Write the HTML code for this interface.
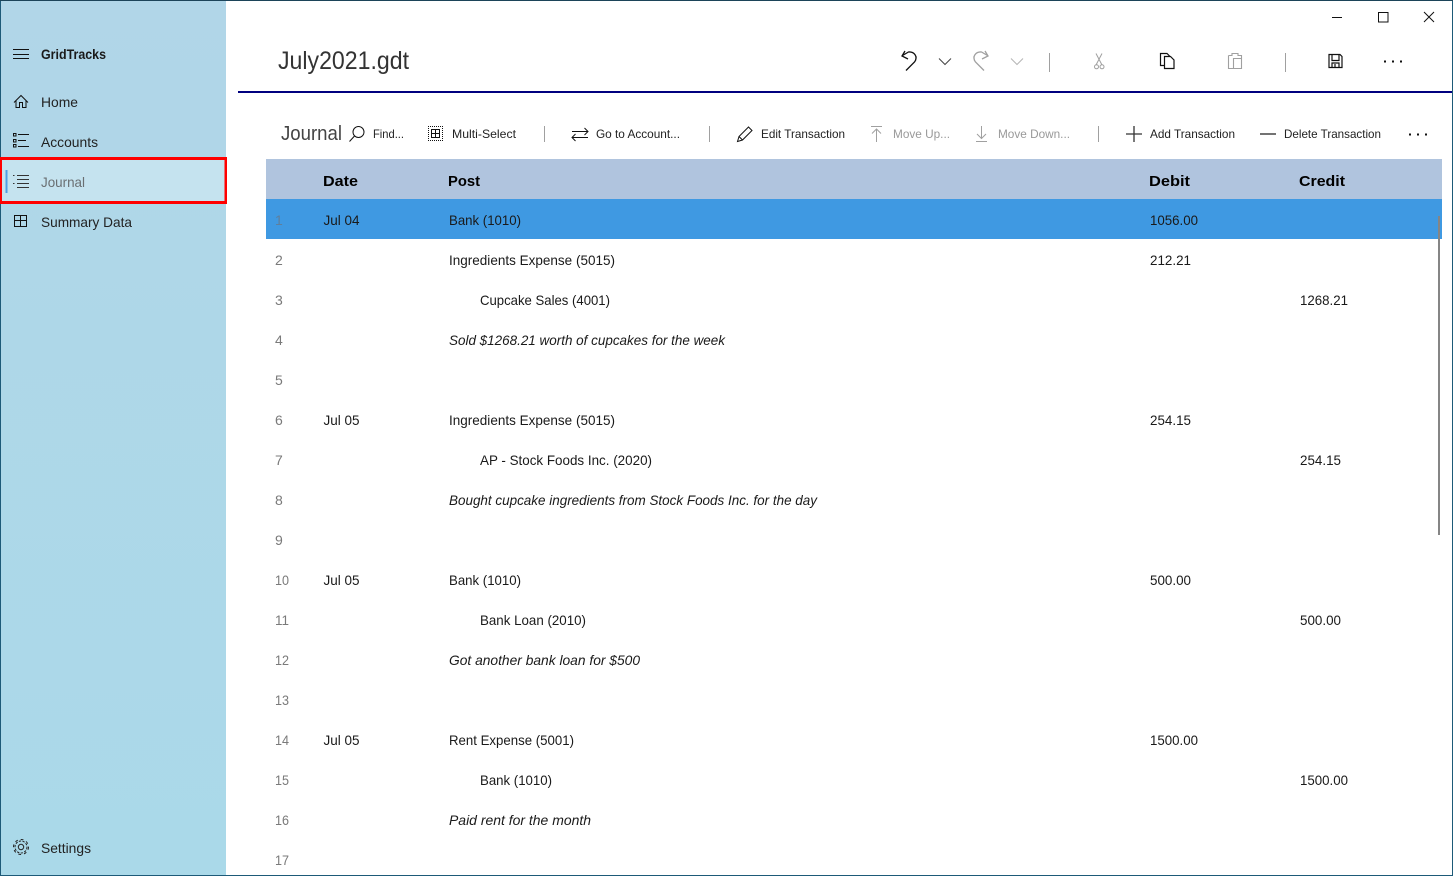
<!DOCTYPE html>
<html lang="en">
<head>
<meta charset="utf-8">
<title>GridTracks - July2021.gdt</title>
<style>
html,body{margin:0;padding:0;width:1453px;height:876px;overflow:hidden;background:#fff}
svg{display:block}
text{font-family:"Liberation Sans",Arial,sans-serif;font-size:14px;fill:#1a1a1a}
.nav{font-size:14px;fill:#222}
.tb{font-size:12px;fill:#222}
.dis{font-size:12px;fill:#999}
.h{font-size:15px;font-weight:bold;fill:#000}
.n{fill:#7a7a7a}
.i{font-style:italic}
.ic{fill:none;stroke:#111;stroke-width:1}
.g{fill:none;stroke:#a0a0a0;stroke-width:1}
</style>
</head>
<body>
<svg width="1453" height="876" viewBox="0 0 1453 876" xmlns="http://www.w3.org/2000/svg">
<defs>
<linearGradient id="sb" x1="0" y1="0" x2="0" y2="1"><stop offset="0" stop-color="#b1d6e8"/><stop offset="1" stop-color="#aad9e9"/></linearGradient>
</defs>
<rect width="1453" height="876" fill="#fff"/>
<rect x="0" y="0" width="226" height="876" fill="url(#sb)"/>

<!-- window border -->
<rect x="0.5" y="0.5" width="1452" height="875" fill="none" stroke="#1d5a78"/>
<rect x="0" y="0" width="1453" height="1" fill="#1c4459"/>

<!-- selected nav item -->
<rect x="1" y="159" width="224" height="43" fill="#c5e3ef"/>
<rect x="5.5" y="170" width="2" height="23" fill="#4f9fe3"/>
<rect x="0" y="157" width="227" height="3" fill="#f00"/>
<rect x="0" y="201" width="227" height="3" fill="#f00"/>
<rect x="0" y="157" width="2" height="47" fill="#f00"/>
<rect x="224.500" y="157" width="2.500" height="47" fill="#f00"/>

<!-- hamburger -->
<path class="ic" d="M13 49.5H29M13 54.5H29M13 58.5H29"/>
<text x="41" y="59" textLength="65" lengthAdjust="spacingAndGlyphs" style="font-weight:bold;font-size:13.5px;fill:#1a1a1a">GridTracks</text>

<!-- home -->
<path class="ic" d="M14 102.5L21 95.5L28 102.5M16 100.5V107.5H19.5V102.5H22.5V107.5H26V100.5"/>
<text class="nav" x="41" y="107" textLength="37" lengthAdjust="spacingAndGlyphs">Home</text>

<!-- accounts -->
<path class="ic" d="M13.5 133.5h2.500v2.500h-2.500zM13.5 139.5h2.500v2.500h-2.500zM13.5 144.5h2.500v2.500h-2.500zM18 134.5H29M18 140.5H26M18 146.5H29"/>
<text class="nav" x="41" y="147" textLength="57" lengthAdjust="spacingAndGlyphs">Accounts</text>

<!-- journal -->
<path class="ic" style="stroke:#333" d="M17 175.5H29M17 179.5H29M17 183.5H29M17 187.5H29"/>
<path class="ic" style="stroke:#333" d="M13 175.5h1.500M13 183.5h1.500"/>
<text class="nav" x="41" y="187" textLength="44" lengthAdjust="spacingAndGlyphs" style="fill:#6a6f72">Journal</text>

<!-- summary -->
<path class="ic" d="M14.5 215.5H26.5V226.5H14.5ZM20.5 215.5V226.5M14.5 220.5H26.5"/>
<text class="nav" x="41" y="227" textLength="91" lengthAdjust="spacingAndGlyphs">Summary Data</text>

<!-- settings -->
<g class="ic" style="stroke:#222;stroke-width:1">
<circle cx="21" cy="847" r="2.700"/>
<circle cx="21" cy="847" r="6" stroke-dasharray="2.300 1.400"/>
<circle cx="21" cy="847" r="7.500" stroke-dasharray="2.800 3"/>
</g>
<text class="nav" x="41" y="853" textLength="50" lengthAdjust="spacingAndGlyphs">Settings</text>

<!-- title -->
<text x="278" y="69" textLength="131" lengthAdjust="spacingAndGlyphs" style="font-size:25px;fill:#333">July2021.gdt</text>
<rect x="238" y="91" width="1214" height="2" fill="#00007f"/>

<!-- window controls -->
<path class="ic" d="M1332 17.5H1342"/>
<rect x="1378.5" y="12.5" width="9.5" height="9.5" class="ic"/>
<path class="ic" d="M1424 12L1434 22M1434 12L1424 22"/>

<!-- top commands -->
<path class="ic" style="stroke-width:1.300" d="M906 70.5L914.5 62C918.5 56.5 914 51.5 908.5 52L902.5 55.5M905 51L902 56L908 59"/>
<path class="ic" style="stroke:#444" d="M939 58.5L945 64.5L951 58.5"/>
<path class="g" style="stroke-width:1.300" d="M984 70.5L975.5 62C971.5 56.5 976 51.5 981.5 52L987.5 55.5M985 51L988 56L982 59"/>
<path class="g" style="stroke:#b5b5b5" d="M1011 58.5L1017 64.5L1023 58.5"/>
<path class="g" d="M1049.5 53V72"/>
<path class="g" d="M1096 53.5L1102 65M1102 53.5L1096 65"/>
<circle class="g" cx="1096.5" cy="66.8" r="2"/>
<circle class="g" cx="1102" cy="66.8" r="2"/>
<path class="ic" style="stroke-width:1.200" d="M1164 65.5H1160.5V53.5H1167L1170 56.5M1164.5 56.5H1170.5L1174 60V68.5H1164.5Z"/>
<path class="g" style="stroke-width:1.100" d="M1228.5 55.5H1232V53.5H1238V55.5H1241.5V58M1228.5 55.5V68.5H1233M1233.5 58.5H1241.5V68.5H1233.5Z"/>
<path class="g" d="M1285.5 53V72"/>
<path class="ic" style="stroke-width:1.200" d="M1329 54.5H1340L1342 56.5V67.5H1329ZM1332 54.5V60.5H1339V54.5M1332 67.5V63H1339V67.5M1335 64V67"/>
<path class="ic" style="stroke-width:2;stroke-dasharray:2 6" d="M1384 61.5H1404"/>

<!-- journal toolbar -->
<text x="281" y="140" textLength="61" lengthAdjust="spacingAndGlyphs" style="font-size:20px;fill:#444">Journal</text>
<circle class="ic" cx="358.5" cy="132" r="5.500"/>
<path class="ic" d="M354.500 136L349.500 141.500"/>
<text class="tb" x="373" y="138" textLength="31" lengthAdjust="spacingAndGlyphs">Find...</text>
<path d="M428 126.500H443M428 140.500H443M428.500 126V141M442.500 126V141" fill="none" stroke="#111" stroke-dasharray="1 1"/>
<path class="ic" d="M431.500 129.500H439.500V137.500H431.500ZM435.500 129.500V137.500M431.500 133.500H439.500"/>
<text class="tb" x="452" y="138" textLength="64" lengthAdjust="spacingAndGlyphs">Multi-Select</text>
<path class="g" d="M544.500 126V142"/>
<path class="ic" d="M572 131.500H588M584.500 128L588 131.500L584.500 135M588 137.500H572M575.500 134L572 137.500L575.500 141"/>
<text class="tb" x="596" y="138" textLength="84" lengthAdjust="spacingAndGlyphs">Go to Account...</text>
<path class="g" d="M709.500 126V142"/>
<path class="ic" d="M737.500 141.500L739 136.500L748.500 127L752 130.500L742.500 140ZM739 136.500L742.500 140"/>
<text class="tb" x="761" y="138" textLength="84" lengthAdjust="spacingAndGlyphs">Edit Transaction</text>
<path class="g" d="M871 126.500H882M876.500 142V129M872 133.500L876.500 129L881 133.500"/>
<text class="dis" x="893" y="138" textLength="57" lengthAdjust="spacingAndGlyphs">Move Up...</text>
<path class="g" d="M976 141.500H987M981.500 126V138.500M977 134L981.500 138.500L986 134"/>
<text class="dis" x="998" y="138" textLength="72" lengthAdjust="spacingAndGlyphs">Move Down...</text>
<path class="g" d="M1098.500 126V142"/>
<path d="M1126 134H1142M1134 126V142" fill="none" stroke="#333" stroke-width="1.300"/>
<text class="tb" x="1150" y="138" textLength="85" lengthAdjust="spacingAndGlyphs">Add Transaction</text>
<path d="M1260 134H1276" fill="none" stroke="#444" stroke-width="1.500"/>
<text class="tb" x="1284" y="138" textLength="97" lengthAdjust="spacingAndGlyphs">Delete Transaction</text>
<path class="ic" style="stroke-width:2;stroke-dasharray:2 6" d="M1409 134.500H1429"/>

<!-- grid header -->
<rect x="266" y="159" width="1176" height="40" fill="#b0c4de"/>
<text class="h" x="323" y="186" textLength="35" lengthAdjust="spacingAndGlyphs">Date</text>
<text class="h" x="448" y="186" textLength="32" lengthAdjust="spacingAndGlyphs">Post</text>
<text class="h" x="1149" y="186" textLength="41" lengthAdjust="spacingAndGlyphs">Debit</text>
<text class="h" x="1299" y="186" textLength="46" lengthAdjust="spacingAndGlyphs">Credit</text>

<rect x="266" y="199" width="1176" height="40" fill="#3f99e2"/>

<!-- row numbers -->
<text class="n" x="275" y="225" style="fill:#5f7f9c">1</text>
<text class="n" x="275" y="265">2</text>
<text class="n" x="275" y="305">3</text>
<text class="n" x="275" y="345">4</text>
<text class="n" x="275" y="385">5</text>
<text class="n" x="275" y="425">6</text>
<text class="n" x="275" y="465">7</text>
<text class="n" x="275" y="505">8</text>
<text class="n" x="275" y="545">9</text>
<text class="n" x="275" y="585" textLength="14" lengthAdjust="spacingAndGlyphs">10</text>
<text class="n" x="275" y="625" textLength="14" lengthAdjust="spacingAndGlyphs">11</text>
<text class="n" x="275" y="665" textLength="14" lengthAdjust="spacingAndGlyphs">12</text>
<text class="n" x="275" y="705" textLength="14" lengthAdjust="spacingAndGlyphs">13</text>
<text class="n" x="275" y="745" textLength="14" lengthAdjust="spacingAndGlyphs">14</text>
<text class="n" x="275" y="785" textLength="14" lengthAdjust="spacingAndGlyphs">15</text>
<text class="n" x="275" y="825" textLength="14" lengthAdjust="spacingAndGlyphs">16</text>
<text class="n" x="275" y="865" textLength="14" lengthAdjust="spacingAndGlyphs">17</text>

<!-- rows -->
<text x="323.5" y="225" textLength="36" lengthAdjust="spacingAndGlyphs">Jul 04</text>
<text x="449" y="225" textLength="72" lengthAdjust="spacingAndGlyphs">Bank (1010)</text>
<text x="1150" y="225" textLength="48" lengthAdjust="spacingAndGlyphs">1056.00</text>

<text x="449" y="265" textLength="166" lengthAdjust="spacingAndGlyphs">Ingredients Expense (5015)</text>
<text x="1150" y="265" textLength="41" lengthAdjust="spacingAndGlyphs">212.21</text>

<text x="480" y="305" textLength="130" lengthAdjust="spacingAndGlyphs">Cupcake Sales (4001)</text>
<text x="1300" y="305" textLength="48" lengthAdjust="spacingAndGlyphs">1268.21</text>

<text class="i" x="449" y="345" textLength="276" lengthAdjust="spacingAndGlyphs">Sold $1268.21 worth of cupcakes for the week</text>

<text x="323.5" y="425" textLength="36" lengthAdjust="spacingAndGlyphs">Jul 05</text>
<text x="449" y="425" textLength="166" lengthAdjust="spacingAndGlyphs">Ingredients Expense (5015)</text>
<text x="1150" y="425" textLength="41" lengthAdjust="spacingAndGlyphs">254.15</text>

<text x="480" y="465" textLength="172" lengthAdjust="spacingAndGlyphs">AP - Stock Foods Inc. (2020)</text>
<text x="1300" y="465" textLength="41" lengthAdjust="spacingAndGlyphs">254.15</text>

<text class="i" x="449" y="505" textLength="368" lengthAdjust="spacingAndGlyphs">Bought cupcake ingredients from Stock Foods Inc. for the day</text>

<text x="323.5" y="585" textLength="36" lengthAdjust="spacingAndGlyphs">Jul 05</text>
<text x="449" y="585" textLength="72" lengthAdjust="spacingAndGlyphs">Bank (1010)</text>
<text x="1150" y="585" textLength="41" lengthAdjust="spacingAndGlyphs">500.00</text>

<text x="480" y="625" textLength="106" lengthAdjust="spacingAndGlyphs">Bank Loan (2010)</text>
<text x="1300" y="625" textLength="41" lengthAdjust="spacingAndGlyphs">500.00</text>

<text class="i" x="449" y="665" textLength="191" lengthAdjust="spacingAndGlyphs">Got another bank loan for $500</text>

<text x="323.5" y="745" textLength="36" lengthAdjust="spacingAndGlyphs">Jul 05</text>
<text x="449" y="745" textLength="125" lengthAdjust="spacingAndGlyphs">Rent Expense (5001)</text>
<text x="1150" y="745" textLength="48" lengthAdjust="spacingAndGlyphs">1500.00</text>

<text x="480" y="785" textLength="72" lengthAdjust="spacingAndGlyphs">Bank (1010)</text>
<text x="1300" y="785" textLength="48" lengthAdjust="spacingAndGlyphs">1500.00</text>

<text class="i" x="449" y="825" textLength="142" lengthAdjust="spacingAndGlyphs">Paid rent for the month</text>

<!-- scrollbar -->
<rect x="1438" y="216" width="2" height="319" fill="#858585"/>
</svg>
</body>
</html>
